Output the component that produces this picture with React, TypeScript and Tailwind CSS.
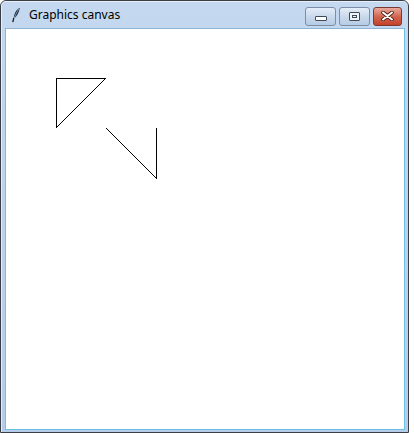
import React from 'react';

function Feather() {
  return (
    <svg width="10" height="16" viewBox="0 0 10 16" className="shrink-0">
      <path d="M8.8 0.8 C5.5 2.5 3 6.5 2.6 11.5 C5.5 10 8 6 8.8 0.8 Z" fill="#1a2a44" />
      <path d="M8 2 C6 5 4.3 8 3.2 11" fill="none" stroke="#d8e4f2" strokeWidth="0.6" />
      <path d="M2.8 11 L1.8 15.2" fill="none" stroke="#111" strokeWidth="1.2" />
    </svg>
  );
}

function CaptionButton({ kind }: { kind: 'min' | 'max' | 'close' }) {
  if (kind === 'close') {
    return (
      <div className="w-[29px] h-[19px] rounded-[3px] border border-[#7a3a32] bg-gradient-to-b from-[#e9a99c] via-[#d2654f] to-[#c4402b] flex items-center justify-center">
        <svg width="13" height="10" viewBox="0 0 13 10">
          <path d="M2 1.5 L11 8.5 M11 1.5 L2 8.5" stroke="#4a1f18" strokeWidth="3.6" strokeLinecap="round" />
          <path d="M2 1.5 L11 8.5 M11 1.5 L2 8.5" stroke="#ffffff" strokeWidth="2" strokeLinecap="round" />
        </svg>
      </div>
    );
  }
  return (
    <div className="w-[31px] h-[19px] rounded-[3px] border border-[#7b8ea8] bg-gradient-to-b from-[#e4edf8] via-[#cad9ec] to-[#b7cbe4] flex items-center justify-center">
      {kind === 'min' ? (
        <div className="w-[12px] h-[5px] mt-[5px] rounded-[1px] border border-[#3d4a5c] bg-white" />
      ) : (
        <div className="w-[11px] h-[9px] rounded-[1px] border border-[#3d4a5c] bg-[#f0f4f8] flex items-center justify-center">
          <div className="w-[5px] h-[3px] border border-[#3d4a5c]" />
        </div>
      )}
    </div>
  );
}

export default function GraphicsCanvas() {
  return (
    <div className="w-[414px] h-[433px] bg-white">
      <div className="w-[409px] h-[433px] flex flex-col border border-[#3a3f47] rounded-t-[6px] bg-gradient-to-b from-[#c4d8ef] to-[#b5cde8] overflow-hidden">
        <div className="h-[27px] shrink-0 flex items-center pl-[9px] pr-[6px] border-t border-l border-white/60 rounded-t-[5px]">
          <Feather />
          <span className="ml-[8px] text-[12px] text-black" style={{ fontFamily: '"Noto Sans", "Open Sans", sans-serif' }}>
            Graphics canvas
          </span>
          <div className="ml-auto flex gap-[3px] mt-[2px]">
            <CaptionButton kind="min" />
            <CaptionButton kind="max" />
            <CaptionButton kind="close" />
          </div>
        </div>
        <div className="flex-1 px-[3px] pb-[3px] border-l border-white/60">
          <div className="w-full h-full bg-white border border-[#8fb3d6] border-b-[#6cc0e6] border-r-[#6cc0e6]">
            <svg width="400" height="400" viewBox="0 0 400 400" shapeRendering="crispEdges">
              <polyline points="50,49 100,49 50,99 50,49" fill="none" stroke="#000" strokeWidth="1" />
              <polyline points="100,99 150,149 150,99" fill="none" stroke="#000" strokeWidth="1" />
            </svg>
          </div>
        </div>
      </div>
    </div>
  );
}
